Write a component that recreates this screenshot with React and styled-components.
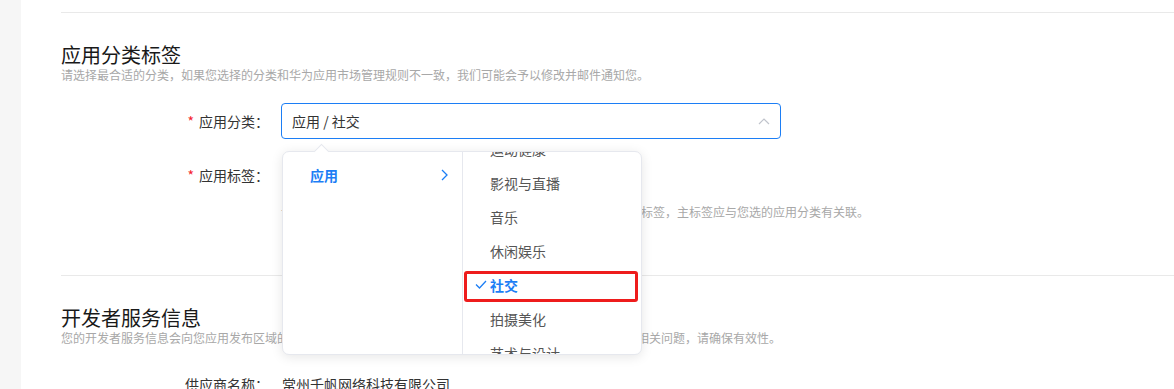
import { useLayoutEffect, useRef } from "react";
import styled, { createGlobalStyle } from "styled-components";

const GlobalStyle = createGlobalStyle`
  html, body {
    margin: 0;
    padding: 0;
    background: #fff;
    font-family: "Noto Sans CJK SC", "Noto Sans", sans-serif;
    color: #333;
    overflow: hidden;
  }
`;

const Page = styled.div`
  display: flex;
  height: 389px;
`;

const Gutter = styled.div`
  width: 21px;
  flex-shrink: 0;
  background: #f6f6f6;
`;

const Main = styled.div`
  flex: 1;
  padding: 12px 0 0 40px;
  background: #fff;
`;

const Section = styled.section`
  border-top: 1px solid #e9e9e9;
  padding: 29px 0 ${(p) => p.$bottom || 0}px;
`;

const Title = styled.h2`
  margin: 0;
  font-size: 20px;
  line-height: 26px;
  font-weight: 400;
  color: #191919;
`;

const Subtitle = styled.p`
  margin: 0 0 21px;
  font-size: 12px;
  line-height: 14px;
  color: #a8a8a8;
  white-space: nowrap;
`;

const Row = styled.div`
  display: flex;
  align-items: flex-start;
  margin-top: ${(p) => p.$gap || 0}px;
`;

const Label = styled.div`
  width: 220px;
  flex-shrink: 0;
  box-sizing: border-box;
  padding-right: 12px;
  text-align: right;
  font-size: 14px;
  line-height: 36px;
  color: #333;
`;

const Star = styled.span`
  color: #f5222d;
  margin-right: 5px;
`;

const Field = styled.div`
  position: relative;
  display: flex;
  flex-direction: column;
`;

const Value = styled.div`
  font-size: 14px;
  line-height: 36px;
  color: #333;
  padding-left: 1px;
`;

const Select = styled.div`
  position: relative;
  box-sizing: border-box;
  width: 500px;
  height: 36px;
  border: 1px solid #1c7ef5;
  border-radius: 4px;
  display: flex;
  align-items: center;
  justify-content: space-between;
  padding: 0 10px 0 10px;
  font-size: 14px;
  color: #333;
`;

const TagSlot = styled.div`
  height: 36px;
`;

const Hint = styled.p`
  margin: 12px 0 0;
  font-size: 12px;
  line-height: 14px;
  color: #a8a8a8;
  white-space: nowrap;
`;

const Dropdown = styled.div`
  position: absolute;
  top: 48px;
  left: 1px;
  z-index: 10;
  width: 360px;
  height: 204px;
  box-sizing: border-box;
  display: flex;
  background: #fff;
  border: 1px solid #e6e8ee;
  border-radius: 7px;
  box-shadow: 0 2px 12px rgba(0, 0, 0, 0.1);
`;

const Caret = styled.div`
  position: absolute;
  top: -6px;
  left: 33px;
  width: 10px;
  height: 10px;
  background: #fff;
  border-left: 1px solid #e6e8ee;
  border-top: 1px solid #e6e8ee;
  transform: rotate(45deg);
`;

const Column = styled.ul`
  list-style: none;
  margin: 0;
  padding: 6px 0;
  width: ${(p) => p.$width}px;
  box-sizing: border-box;
  overflow-y: auto;
  scrollbar-width: none;
  border-right: ${(p) => (p.$divider ? "1px solid #e6e8ee" : "none")};
  &::-webkit-scrollbar {
    display: none;
  }
`;

const Item = styled.li`
  position: relative;
  height: 34px;
  display: flex;
  align-items: center;
  justify-content: space-between;
  padding: 0 14px 0 27px;
  font-size: 14px;
  color: ${(p) => (p.$active ? "#1c7ef5" : "#555")};
  font-weight: ${(p) => (p.$active ? 700 : 400)};

  ${(p) =>
    p.$marked &&
    `
    &::after {
      content: "";
      position: absolute;
      top: 3px;
      left: 1px;
      right: 3px;
      bottom: 0;
      border: 3px solid #ee1c1c;
      border-radius: 3px;
    }
  `}
`;

const Check = styled.span`
  position: absolute;
  left: 12px;
  top: 12px;
  display: flex;
`;

const tags = [
  "新闻阅读",
  "购物比价",
  "运动健康",
  "影视与直播",
  "音乐",
  "休闲娱乐",
  "社交",
  "拍摄美化",
  "艺术与设计",
  "出行导航",
];

function ChevronUp() {
  return (
    <svg width="12" height="8" viewBox="0 0 12 8" fill="none">
      <path d="M1 7l5-5 5 5" stroke="#c0c4cc" strokeWidth="1.2" />
    </svg>
  );
}

function ChevronRight() {
  return (
    <svg width="7" height="12" viewBox="0 0 7 12" fill="none">
      <path d="M1 1l5 5-5 5" stroke="#1c7ef5" strokeWidth="1.3" />
    </svg>
  );
}

function CheckMark() {
  return (
    <svg width="12" height="9" viewBox="0 0 12 9" fill="none">
      <path d="M1 4.5l3.5 3.5L11 1" stroke="#1c7ef5" strokeWidth="1.3" />
    </svg>
  );
}

function Cascader() {
  const listRef = useRef(null);

  useLayoutEffect(() => {
    if (listRef.current) listRef.current.scrollTop = 94;
  }, []);

  return (
    <Dropdown>
      <Caret />
      <Column $width={180} $divider>
        <Item $active>
          应用
          <ChevronRight />
        </Item>
      </Column>
      <Column $width={178} ref={listRef}>
        {tags.map((t) => (
          <Item key={t} $active={t === "社交"} $marked={t === "社交"}>
            {t === "社交" && (
              <Check>
                <CheckMark />
              </Check>
            )}
            {t}
          </Item>
        ))}
      </Column>
    </Dropdown>
  );
}

export default function App() {
  return (
    <>
      <GlobalStyle />
      <Page>
        <Gutter />
        <Main>
          <Section $bottom={56}>
            <Title>应用分类标签</Title>
            <Subtitle>
              请选择最合适的分类，如果您选择的分类和华为应用市场管理规则不一致，我们可能会予以修改并邮件通知您。
            </Subtitle>
            <Row>
              <Label>
                <Star>*</Star>应用分类：
              </Label>
              <Field>
                <Select>
                  应用 / 社交
                  <ChevronUp />
                </Select>
                <Cascader />
              </Field>
            </Row>
            <Row $gap={18}>
              <Label>
                <Star>*</Star>应用标签：
              </Label>
              <Field>
                <TagSlot />
                <Hint>
                  请选择与您应用功能相符的标签，最多可选择五个标签，第一个为主标签，主标签应与您选的应用分类有关联。
                </Hint>
              </Field>
            </Row>
          </Section>
          <Section>
            <Title>开发者服务信息</Title>
            <Subtitle>
              您的开发者服务信息会向您应用发布区域的用户展示，用户可以通过该信息联系您，咨询使用问题或反馈应用相关问题，请确保有效性。
            </Subtitle>
            <Row>
              <Label>供应商名称：</Label>
              <Value>常州千帆网络科技有限公司</Value>
            </Row>
          </Section>
        </Main>
      </Page>
    </>
  );
}
